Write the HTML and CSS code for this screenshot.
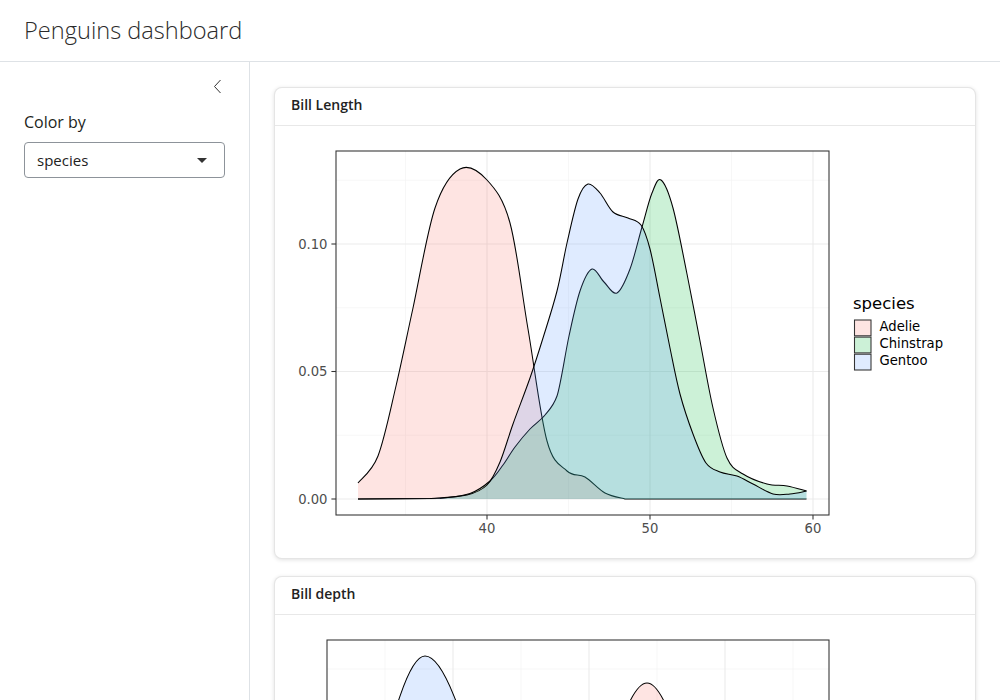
FILE: index.html
```html
<!DOCTYPE html>
<html lang="en">
<head>
<meta charset="utf-8">
<title>Penguins dashboard</title>
<link rel="stylesheet" href="styles.css">
</head>
<body>
<div class="app">
  <header class="topbar">
    <h1 class="title">Penguins dashboard</h1>
  </header>
  <div class="layout">
    <aside class="sidebar">
      <button class="collapse" aria-label="Collapse sidebar">
        <svg width="9" height="15" viewBox="0 0 9 15"><polyline points="7.5,1 1.5,7.5 7.5,14" fill="none" stroke="#333" stroke-width="1"/></svg>
      </button>
      <label class="field-label">Color by</label>
      <div class="select">
        <span>species</span>
        <span class="caret"></span>
      </div>
    </aside>
    <main class="main">
      <section class="card">
        <div class="card-header">Bill Length</div>
        <div class="card-body">
          <svg class="plot" viewBox="291 141 668 400">
            <g class="grid-minor">
              <line x1="336" x2="829" y1="434.25" y2="434.25"/>
              <line x1="336" x2="829" y1="306.75" y2="306.75"/>
              <line x1="336" x2="829" y1="179.25" y2="179.25"/>
              <line x1="405.5" x2="405.5" y1="150" y2="514"/>
              <line x1="568.5" x2="568.5" y1="150" y2="514"/>
              <line x1="731.5" x2="731.5" y1="150" y2="514"/>
            </g>
            <g class="grid-major">
              <line x1="336" x2="829" y1="498" y2="498"/>
              <line x1="336" x2="829" y1="370.5" y2="370.5"/>
              <line x1="336" x2="829" y1="243" y2="243"/>
              <line x1="487" x2="487" y1="150" y2="514"/>
              <line x1="650" x2="650" y1="150" y2="514"/>
              <line x1="813" x2="813" y1="150" y2="514"/>
            </g>
            <path class="f-a" d="M358,482 C361.3,477.5 371.7,471.2 378,455 C384.3,438.8 390.2,409.7 396,385 C401.8,360.3 406.5,336.7 413,307 C419.5,277.3 427.2,230.2 435,207 C442.8,183.8 451.3,172.7 460,168 C468.7,163.3 478.7,170 487,179 C495.3,188 503.2,197.2 510,222 C516.8,246.8 521.8,291.7 528,328 C534.2,364.3 540.5,416.3 547,440 C553.5,463.7 560.7,464 567,470 C573.3,476 578.7,472.3 585,476 C591.3,479.7 598.3,488.3 605,492 C611.7,495.7 621.7,497 625,498 L806.5,498 L358,498 Z"/>
            <path class="ln" d="M358,482 C361.3,477.5 371.7,471.2 378,455 C384.3,438.8 390.2,409.7 396,385 C401.8,360.3 406.5,336.7 413,307 C419.5,277.3 427.2,230.2 435,207 C442.8,183.8 451.3,172.7 460,168 C468.7,163.3 478.7,170 487,179 C495.3,188 503.2,197.2 510,222 C516.8,246.8 521.8,291.7 528,328 C534.2,364.3 540.5,416.3 547,440 C553.5,463.7 560.7,464 567,470 C573.3,476 578.7,472.3 585,476 C591.3,479.7 598.3,488.3 605,492 C611.7,495.7 621.7,497 625,498 L806.5,498"/>
            <path class="f-c" d="M358,498 L440,497.6 C445,496.75 461.7,495.4 470,492.5 C478.3,489.6 484.5,484.75 490,480 C495.5,475.25 498.8,469.7 503,464 C507.2,458.3 510.5,452 515,446 C519.5,440 525,433.3 530,428 C535,422.7 540.5,419.5 545,414 C549.5,408.5 553.5,405 557,395 C560.5,385 565.2,352.5 569,335 C572.8,317.5 576.2,301.2 580,290 C583.8,278.8 588,269.5 592,268 C596,266.5 599.8,277 604,281 C608.2,285 612.7,294.2 617,292 C621.3,289.8 625.8,279 630,268 C634.2,257 638.3,238.7 642,226 C645.7,213.3 648.8,199.8 652,192 C655.2,184.2 657.5,176.5 661,179 C664.5,181.5 668.7,191.3 673,207 C677.3,222.7 682.5,250.8 687,273 C691.5,295.2 695.7,317.7 700,340 C704.3,362.3 708.5,387.5 713,407 C717.5,426.5 722,446 727,457 C732,468 736.3,468.7 743,473 C749.7,477.3 759.7,481 767,483 C774.3,485 780.4,483.8 787,485 C793.6,486.2 803.25,489.2 806.5,490 L806.5,498 Z"/>
            <path class="ln" d="M358,498 L440,497.6 C445,496.75 461.7,495.4 470,492.5 C478.3,489.6 484.5,484.75 490,480 C495.5,475.25 498.8,469.7 503,464 C507.2,458.3 510.5,452 515,446 C519.5,440 525,433.3 530,428 C535,422.7 540.5,419.5 545,414 C549.5,408.5 553.5,405 557,395 C560.5,385 565.2,352.5 569,335 C572.8,317.5 576.2,301.2 580,290 C583.8,278.8 588,269.5 592,268 C596,266.5 599.8,277 604,281 C608.2,285 612.7,294.2 617,292 C621.3,289.8 625.8,279 630,268 C634.2,257 638.3,238.7 642,226 C645.7,213.3 648.8,199.8 652,192 C655.2,184.2 657.5,176.5 661,179 C664.5,181.5 668.7,191.3 673,207 C677.3,222.7 682.5,250.8 687,273 C691.5,295.2 695.7,317.7 700,340 C704.3,362.3 708.5,387.5 713,407 C717.5,426.5 722,446 727,457 C732,468 736.3,468.7 743,473 C749.7,477.3 759.7,481 767,483 C774.3,485 780.4,483.8 787,485 C793.6,486.2 803.25,489.2 806.5,490"/>
            <path class="f-g" d="M358,498 L430,497.6 C436.2,497 457.5,496.3 467,494 C476.5,491.7 481.5,489.5 487,484 C492.5,478.5 495.7,471.2 500,461 C504.3,450.8 508,437 513,423 C518,409 525,391.3 530,377 C535,362.7 538.5,351.5 543,337 C547.5,322.5 553,305.8 557,290 C561,274.2 563.5,257.3 567,242 C570.5,226.7 574.5,207.8 578,198 C581.5,188.2 584.3,184 588,183 C591.7,182 595.8,187.3 600,192 C604.2,196.7 608.3,206.8 613,211 C617.7,215.2 623.3,214.8 628,217 C632.7,219.2 637.3,218.8 641,224 C644.7,229.2 646.8,235.8 650,248 C653.2,260.2 656.7,280.5 660,297 C663.3,313.5 666.7,331 670,347 C673.3,363 676.2,378.7 680,393 C683.8,407.3 688.7,421.5 693,433 C697.3,444.5 701.5,455.7 706,462 C710.5,468.3 714.8,468.8 720,471 C725.2,473.2 731.5,473 737,475 C742.5,477 747,480 753,483 C759,486 766.8,491.3 773,493 C779.2,494.7 784.4,493.5 790,493 C795.6,492.5 803.75,490.5 806.5,490 L806.5,498 Z"/>
            <path class="ln" d="M358,498 L430,497.6 C436.2,497 457.5,496.3 467,494 C476.5,491.7 481.5,489.5 487,484 C492.5,478.5 495.7,471.2 500,461 C504.3,450.8 508,437 513,423 C518,409 525,391.3 530,377 C535,362.7 538.5,351.5 543,337 C547.5,322.5 553,305.8 557,290 C561,274.2 563.5,257.3 567,242 C570.5,226.7 574.5,207.8 578,198 C581.5,188.2 584.3,184 588,183 C591.7,182 595.8,187.3 600,192 C604.2,196.7 608.3,206.8 613,211 C617.7,215.2 623.3,214.8 628,217 C632.7,219.2 637.3,218.8 641,224 C644.7,229.2 646.8,235.8 650,248 C653.2,260.2 656.7,280.5 660,297 C663.3,313.5 666.7,331 670,347 C673.3,363 676.2,378.7 680,393 C683.8,407.3 688.7,421.5 693,433 C697.3,444.5 701.5,455.7 706,462 C710.5,468.3 714.8,468.8 720,471 C725.2,473.2 731.5,473 737,475 C742.5,477 747,480 753,483 C759,486 766.8,491.3 773,493 C779.2,494.7 784.4,493.5 790,493 C795.6,492.5 803.75,490.5 806.5,490"/>
            <rect class="panel" x="336" y="150" width="493" height="364"/>
            <g class="ticks">
              <line x1="331.4" x2="336" y1="498" y2="498"/>
              <line x1="331.4" x2="336" y1="370.5" y2="370.5"/>
              <line x1="331.4" x2="336" y1="243" y2="243"/>
              <line x1="487" x2="487" y1="514" y2="518.6"/>
              <line x1="650" x2="650" y1="514" y2="518.6"/>
              <line x1="813" x2="813" y1="514" y2="518.6"/>
            </g>
            <g class="axis-y">
              <text x="327.5" y="502.8">0.00</text>
              <text x="327.5" y="375.3">0.05</text>
              <text x="327.5" y="247.8">0.10</text>
            </g>
            <g class="axis-x">
              <text x="487" y="531.6">40</text>
              <text x="650" y="531.6">50</text>
              <text x="813" y="531.6">60</text>
            </g>
            <g class="legend">
              <text class="legend-title" x="853" y="307.8">species</text>
              <rect class="f-a-key" x="854.5" y="319" width="16.5" height="15.8"/>
              <rect class="f-c-key" x="854.5" y="336.1" width="16.5" height="15.8"/>
              <rect class="f-g-key" x="854.5" y="353.2" width="16.5" height="15.8"/>
              <text class="legend-label" x="879.5" y="329.6">Adelie</text>
              <text class="legend-label" x="879.5" y="346.8">Chinstrap</text>
              <text class="legend-label" x="879.5" y="364">Gentoo</text>
            </g>
          </svg>
        </div>
      </section>
      <section class="card">
        <div class="card-header">Bill depth</div>
        <div class="card-body">
          <svg class="plot" viewBox="291 630 668 400">
            <defs>
              <clipPath id="panel2"><rect x="327" y="639" width="502" height="364"/></clipPath>
            </defs>
            <g class="grid-minor">
              <line x1="327" x2="829" y1="668" y2="668"/>
              <line x1="327" x2="829" y1="759" y2="759"/>
              <line x1="327" x2="829" y1="850" y2="850"/>
              <line x1="327" x2="829" y1="941" y2="941"/>
              <line x1="385" x2="385" y1="639" y2="1003"/>
              <line x1="521" x2="521" y1="639" y2="1003"/>
              <line x1="657" x2="657" y1="639" y2="1003"/>
              <line x1="793" x2="793" y1="639" y2="1003"/>
            </g>
            <g class="grid-major">
              <line x1="327" x2="829" y1="713.5" y2="713.5"/>
              <line x1="327" x2="829" y1="804.5" y2="804.5"/>
              <line x1="327" x2="829" y1="895.5" y2="895.5"/>
              <line x1="327" x2="829" y1="986.5" y2="986.5"/>
              <line x1="453" x2="453" y1="639" y2="1003"/>
              <line x1="589" x2="589" y1="639" y2="1003"/>
              <line x1="725" x2="725" y1="639" y2="1003"/>
            </g>
            <g clip-path="url(#panel2)">
              <path class="f-a" d="M497,983.2 C530.3,976.5 563.7,924.9 597,801.8 C613.7,740.3 630.3,682 647,682 C663.7,682 680.3,740.3 697,801.8 C730.3,924.9 763.7,976.5 797,983.2 L797,986.5 L497,986.5 Z"/>
              <path class="ln" d="M497,983.2 C530.3,976.5 563.7,924.9 597,801.8 C613.7,740.3 630.3,682 647,682 C663.7,682 680.3,740.3 697,801.8 C730.3,924.9 763.7,976.5 797,983.2"/>
              <path class="f-c" d="M502,983.5 C538.7,977.6 575.3,932.2 612,823.7 C630.3,769.4 648.7,718 667,718 C685.3,718 703.7,769.4 722,823.7 C758.7,932.2 795.3,977.6 832,983.5 L832,986.5 L502,986.5 Z"/>
              <path class="ln" d="M502,983.5 C538.7,977.6 575.3,932.2 612,823.7 C630.3,769.4 648.7,718 667,718 C685.3,718 703.7,769.4 722,823.7 C758.7,932.2 795.3,977.6 832,983.5"/>
              <path class="f-g" d="M275,982.8 C308.3,975.6 341.7,919.5 375,785.4 C391.7,718.4 408.3,655 425,655 C444.3,655 463.7,718.4 483,785.4 C521.7,919.5 560.3,975.6 599,982.8 L599,986.5 L275,986.5 Z"/>
              <path class="ln" d="M275,982.8 C308.3,975.6 341.7,919.5 375,785.4 C391.7,718.4 408.3,655 425,655 C444.3,655 463.7,718.4 483,785.4 C521.7,919.5 560.3,975.6 599,982.8"/>
            </g>
            <rect class="panel" x="327" y="639" width="502" height="364"/>
          </svg>
        </div>
      </section>
    </main>
  </div>
</div>
</body>
</html>
```

FILE: styles.css
```css
* { box-sizing: border-box; }

html, body {
  margin: 0;
  height: 100%;
}

body {
  font-family: "Open Sans", "Noto Sans", sans-serif;
  color: #1d1f21;
  background: #fff;
  overflow: hidden;
}

.app {
  display: grid;
  grid-template-rows: 62px 1fr;
  height: 100vh;
}

.topbar {
  display: flex;
  align-items: center;
  padding: 0 24px;
  border-bottom: 1px solid #dee2e6;
}

.title {
  margin: 0;
  font-size: 23.6px;
  font-weight: 300;
  line-height: 1.2;
  color: #2b2b2b;
}

.layout {
  display: grid;
  grid-template-columns: 250px 1fr;
  overflow: hidden;
}

.sidebar {
  position: relative;
  border-right: 1px solid #dee2e6;
  padding: 48px 24px 24px 24px;
}

.collapse {
  position: absolute;
  top: 17px;
  right: 27px;
  padding: 0;
  border: 0;
  background: none;
  line-height: 0;
}

.field-label {
  display: block;
  font-size: 16px;
  line-height: 24px;
  margin-bottom: 8px;
  color: #1d1f21;
}

.select {
  height: 36px;
  border: 1px solid #8d939a;
  border-radius: 4px;
  display: flex;
  align-items: center;
  justify-content: space-between;
  padding: 0 17px 0 12px;
  font-size: 15px;
  color: #222;
}

.caret {
  width: 0;
  height: 0;
  border-left: 5.5px solid transparent;
  border-right: 5.5px solid transparent;
  border-top: 5px solid #333;
}

.main {
  display: flex;
  flex-direction: column;
  gap: 17px;
  padding: 25px 24px;
  overflow: hidden;
}

.card {
  flex-shrink: 0;
  background: #fff;
  border: 1px solid rgba(0, 0, 0, 0.1);
  border-radius: 8px;
  box-shadow: 0 1px 4px rgba(0, 0, 0, 0.12);
}

.card-header {
  padding: 6px 16px 10px 16px;
  font-size: 14px;
  line-height: 21px;
  font-weight: 600;
  color: #222;
  border-bottom: 1px solid rgba(0, 0, 0, 0.09);
}

.card-body {
  padding: 16px;
}

.plot {
  display: block;
  width: 100%;
  height: 400px;
  font-family: "DejaVu Sans", sans-serif;
}

.grid-minor line { stroke: #f2f2f2; stroke-width: 0.6; }
.grid-major line { stroke: #ebebeb; stroke-width: 1.07; }

.f-a { fill: #F8766D; fill-opacity: 0.2; }
.f-c { fill: #00BA38; fill-opacity: 0.2; }
.f-g { fill: #619CFF; fill-opacity: 0.2; }

.ln { fill: none; stroke: #000; stroke-width: 1.05; }

.panel { fill: none; stroke: #333; stroke-width: 1.07; }
.ticks line { stroke: #333; stroke-width: 1.07; }

.axis-y text { font-size: 13.2px; fill: #4d4d4d; text-anchor: end; }
.axis-x text { font-size: 13.2px; fill: #4d4d4d; text-anchor: middle; }

.legend-title { font-size: 16.5px; fill: #000; }
.legend-label { font-size: 13.2px; fill: #000; }

.f-a-key { fill: #fee4e2; stroke: #333; stroke-width: 1.07; }
.f-c-key { fill: #ccf1d7; stroke: #333; stroke-width: 1.07; }
.f-g-key { fill: #dfebff; stroke: #333; stroke-width: 1.07; }
```
